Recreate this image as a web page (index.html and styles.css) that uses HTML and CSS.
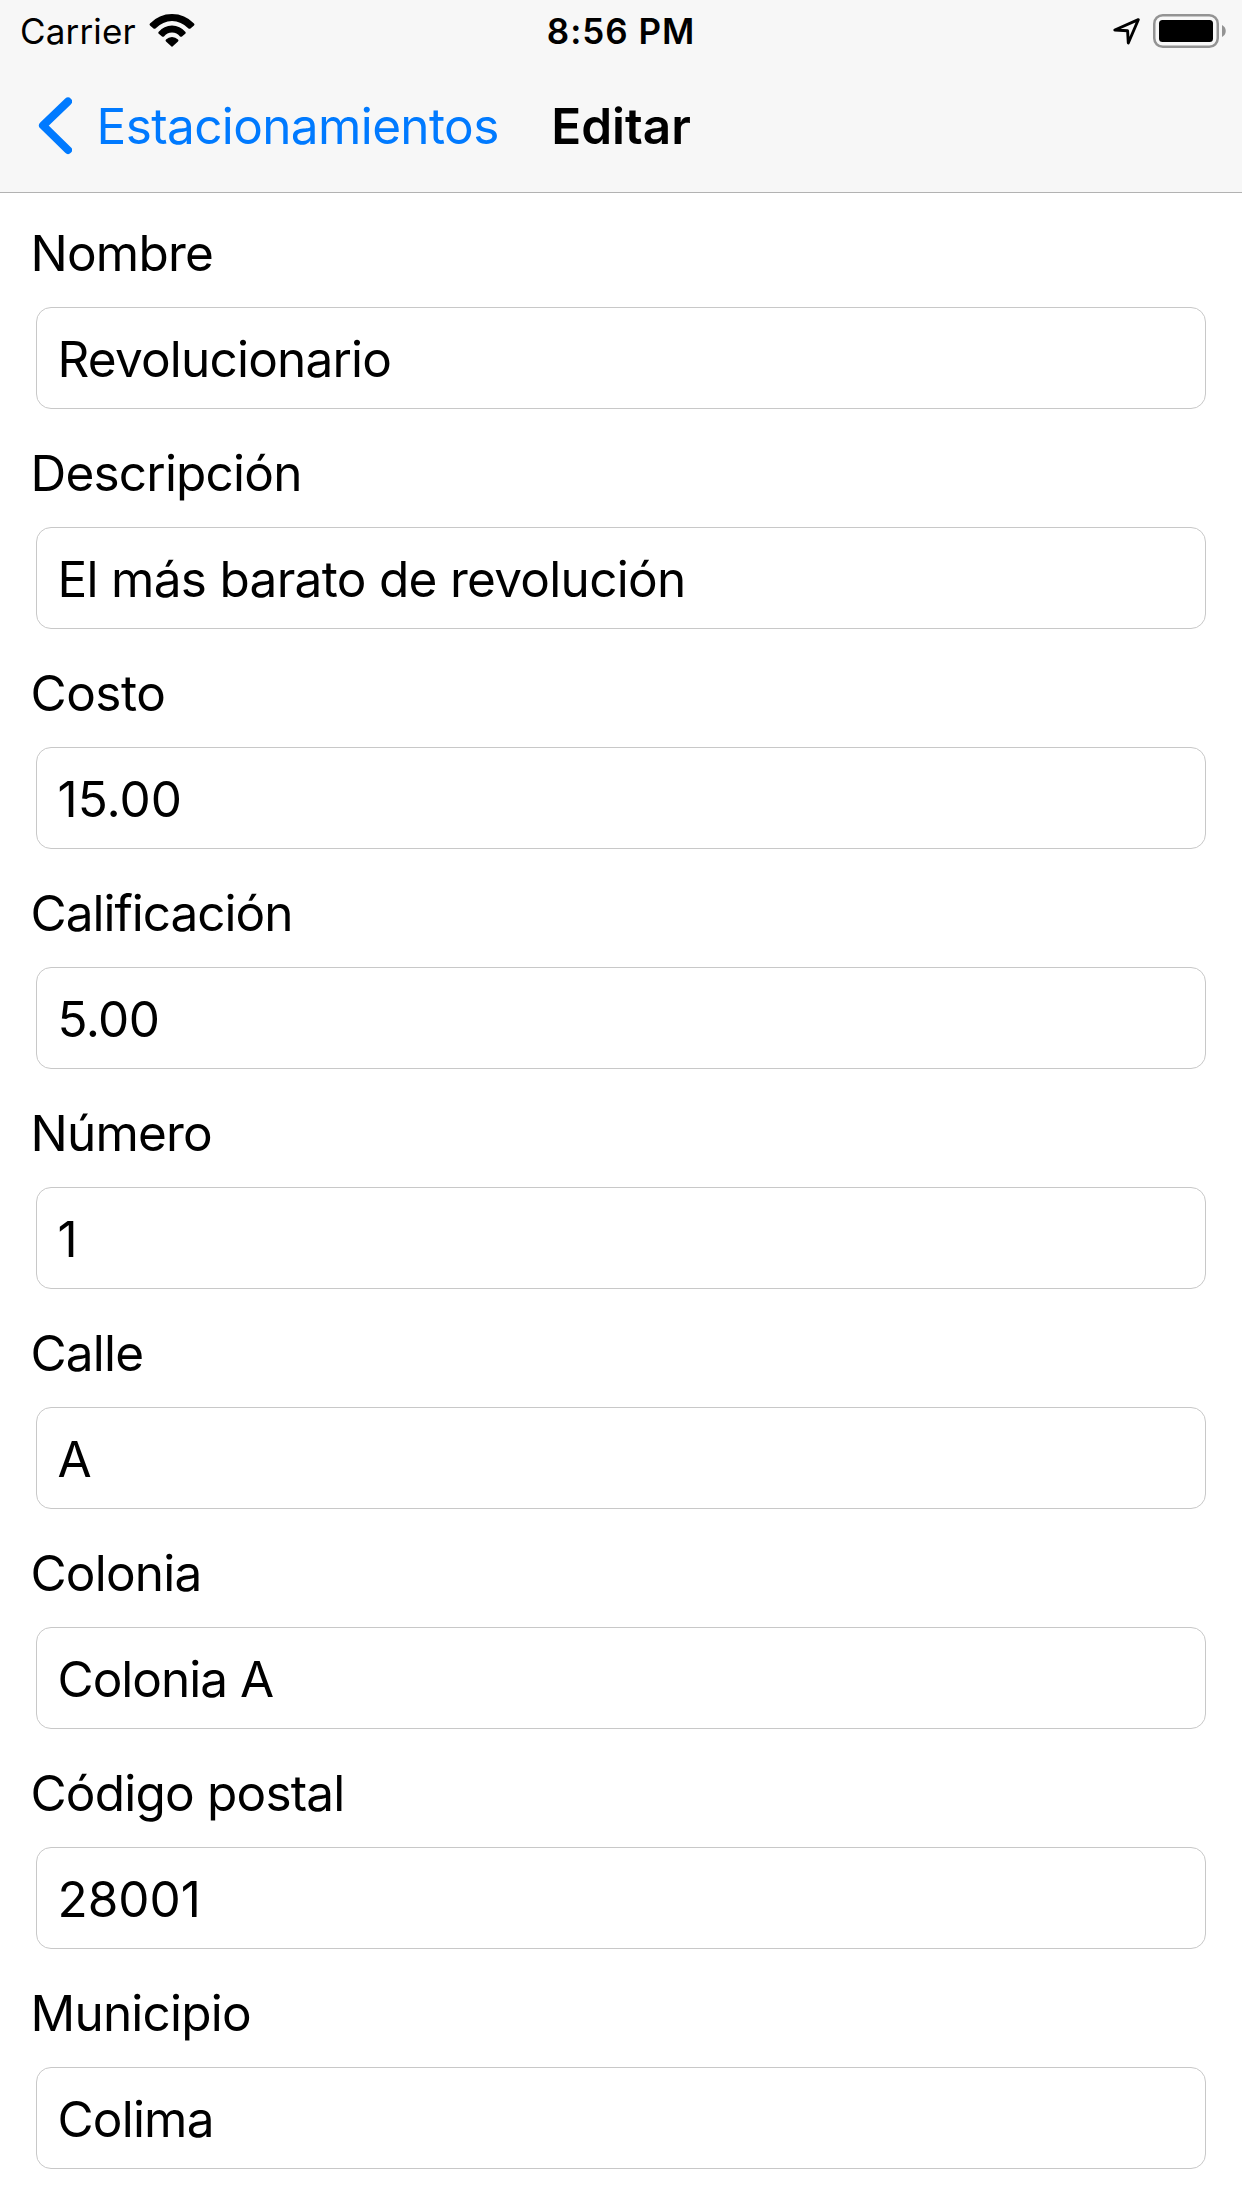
FILE: index.html
```html
<!DOCTYPE html>
<html lang="es"><head><meta charset="utf-8"><title>Editar</title><link rel="stylesheet" href="styles.css"></head>
<body>
<header class="top">
<div class="status">
<div class="carrier"><span class="carrier-name">Carrier</span><svg class="wifi" width="46" height="34" viewBox="0 0 46 34"><path d="M1 9.500Q10 0 23 0T45 9.500Q46 10.500 45 11.500L41.500 14.500Q40.500 15 39.500 14.500Q32 7 23 7T6.500 14.500Q5.500 15 4.500 14.500L1 11.500Q0 10.500 1 9.500zM9.500 18Q15 11.500 23 11.500T36.500 18Q37 19 36.500 19.500L33 22.500Q32 23 31 22.500Q28 18.500 23 18.500T15 22.500Q14 23 13 22.500L9.500 19.500Q9 19 9.500 18zM17 25.500Q19.500 23 23 23T29 25.500Q30 26.500 29 27.500L23.500 32.500Q23 33 22.500 32.500L17 27.500Q16 26.500 17 25.500z"/></svg></div>
<span class="time">8:56 PM</span>
<div class="indicators"><svg class="location" width="28" height="28" viewBox="0 0 28 28"><path d="M1.800 13L25.300 2.700 15.300 26 14.600 13.800z"/></svg><svg width="74" height="34" viewBox="0 0 74 34"><rect class="shell" x="1.250" y="1.250" width="63.500" height="31.500" rx="8.500"/><rect x="6" y="6" width="54" height="22" rx="3.500"/><path class="tip" d="M69 11c5 2.500 5 9.500 0 12z"/></svg></div>
</div>
<nav class="nav"><a class="back"><svg class="chevron" width="36" height="60" viewBox="0 0 36 60"><path d="M32 5.500L7 29.500l25 24.500"/></svg><span class="back-label">Estacionamientos</span></a><h1 class="title">Editar</h1></nav>
</header>
<main class="form">
<label class="field"><span class="label">Nombre</span><span class="input">Revolucionario</span></label>
<label class="field"><span class="label">Descripción</span><span class="input sentence">El más barato de revolución</span></label>
<label class="field"><span class="label costo">Costo</span><span class="input numeric">15.00</span></label>
<label class="field"><span class="label calificacion">Calificación</span><span class="input rating">5.00</span></label>
<label class="field"><span class="label">Número</span><span class="input">1</span></label>
<label class="field"><span class="label">Calle</span><span class="input">A</span></label>
<label class="field"><span class="label">Colonia</span><span class="input colonia">Colonia A</span></label>
<label class="field"><span class="label">Código postal</span><span class="input numeric">28001</span></label>
<label class="field"><span class="label">Municipio</span><span class="input">Colima</span></label>
</main>
</body></html>
```
FILE: styles.css
```css
*{box-sizing:border-box}
body{margin:0;width:1242px;height:2208px;overflow:hidden;background:#fff;color:#000;font-family:Inter,"Liberation Sans",sans-serif;font-size:49.5px}
.top{height:193px;background:#f7f7f7;border-bottom:1px solid #b2b2b2}
.status{height:60px;display:grid;grid-template-columns:1fr auto 1fr;align-items:center;padding:0 15px}
.carrier{display:flex;align-items:center;gap:14px;padding-left:5px;font-size:35px;line-height:60px;letter-spacing:.15px}
.carrier-name{width:115px;padding-top:1px}
.time{font-size:35px;font-weight:600;letter-spacing:.95px;line-height:60px;padding-top:1px}
.indicators{display:flex;justify-content:flex-end;align-items:center;gap:12px}
.location{fill:none;stroke:#000;stroke-width:2.9;stroke-linejoin:round}
.shell{fill:none;stroke:#939393;stroke-width:2.5}
.tip{fill:#939393}
.nav{height:132px;display:grid;grid-template-columns:1fr auto 1fr;align-items:center;padding:0 36px}
.back{display:flex;align-items:center;gap:24.5px;color:#007aff;letter-spacing:-.62px}
.chevron{fill:none;stroke:#007aff;stroke-width:8;stroke-linecap:round;stroke-linejoin:round}
.title{margin:0;font-size:49.5px;font-weight:600;letter-spacing:0}
.form{padding:32px 36px 0}
.field{display:block;height:220px;letter-spacing:-.8px}
.label{display:block;height:82px;line-height:56px;margin-left:-5.5px}
.costo{letter-spacing:-.5px}
.calificacion{letter-spacing:-1px}
.input{display:flex;align-items:center;height:102px;padding:2px 20.5px 0;border:1px solid #c8c8c8;border-radius:15px}
.sentence{letter-spacing:-.7px}
.numeric{letter-spacing:0}
.rating{letter-spacing:-.6px}
.colonia{letter-spacing:-1px}
```
